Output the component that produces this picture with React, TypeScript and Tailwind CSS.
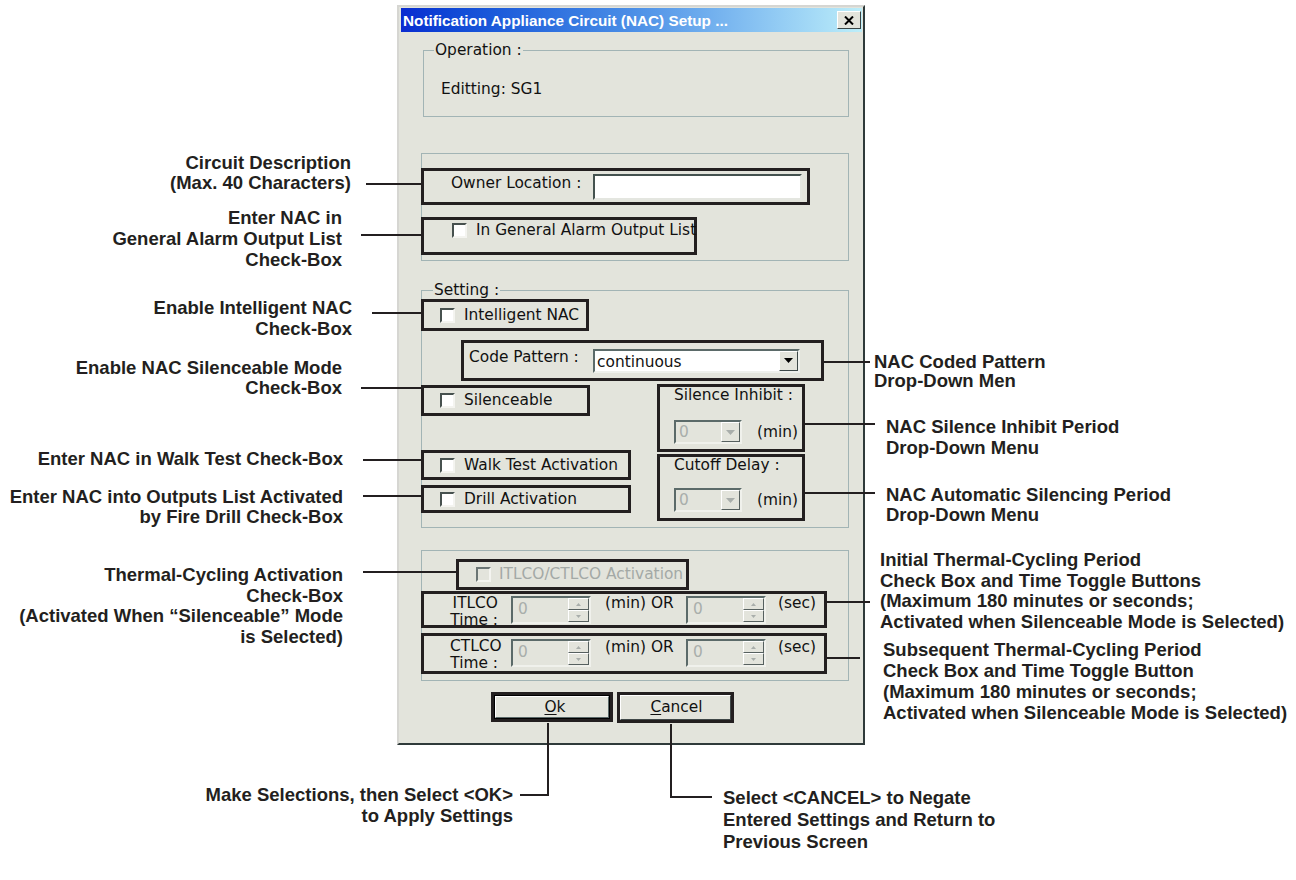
import React from 'react';

// NAC setup dialog with callout annotations

function Checkbox({ disabled }: { disabled?: boolean }) {
  return (
    <span
      className={
        disabled
          ? 'inline-block w-[15px] h-[15px] shrink-0 bg-[#e3e4dc] border-2 border-t-[#6b7574] border-l-[#6b7574] border-r-[#f4f4f0] border-b-[#f4f4f0]'
          : 'inline-block w-[15px] h-[15px] shrink-0 bg-white border-2 border-t-[#47514f] border-l-[#47514f] border-r-[#f4f4f0] border-b-[#f4f4f0]'
      }
    />
  );
}

function Tri({ color, up }: { color: string; up?: boolean }) {
  return (
    <svg width="9" height="5" viewBox="0 0 9 5">
      <path d={up ? 'M4.5 0L9 5H0z' : 'M0 0h9L4.5 5z'} fill={color} />
    </svg>
  );
}

function SmallTri({ up }: { up?: boolean }) {
  return (
    <svg width="5" height="3" viewBox="0 0 5 3">
      <path d={up ? 'M2.5 0L5 3H0z' : 'M0 0h5L2.5 3z'} fill="#a9aeab" />
    </svg>
  );
}

function SmallCombo() {
  return (
    <div className="w-[68px] h-[24px] flex bg-[#e3e4dc] border-2 border-t-[#5b6a69] border-l-[#5b6a69] border-r-[#f0f1ec] border-b-[#f0f1ec]">
      <span className="flex-1 pl-[3px] flex items-center text-[#a9aeab]">0</span>
      <span className="w-[19px] flex items-center justify-center border border-t-white border-l-white border-r-[#56605f] border-b-[#56605f]">
        <Tri color="#a9aeab" />
      </span>
    </div>
  );
}

function Spin() {
  return (
    <div className="w-[80px] h-[28px] flex bg-[#e3e4dc] border-2 border-t-[#5b6a69] border-l-[#5b6a69] border-r-[#f0f1ec] border-b-[#f0f1ec]">
      <span className="flex-1 pl-[5px] pt-[3px] text-[#a9aeab]">0</span>
      <div className="w-[21px] flex flex-col">
        <span className="flex-1 flex items-center justify-center border border-t-white border-l-white border-r-[#56605f] border-b-[#56605f]">
          <SmallTri up />
        </span>
        <span className="flex-1 flex items-center justify-center border border-t-white border-l-white border-r-[#56605f] border-b-[#56605f]">
          <SmallTri />
        </span>
      </div>
    </div>
  );
}

function Note({ className, lines }: { className: string; lines: string[] }) {
  return (
    <div className={`absolute whitespace-nowrap font-['Liberation_Sans',Arial,sans-serif] font-bold text-[18.5px] text-[#231f20] ${className}`}>
      {lines.map((l) => (
        <div key={l}>{l}</div>
      ))}
    </div>
  );
}

export default function App() {
  return (
    <div className="relative w-[1296px] h-[880px] overflow-hidden bg-white font-['DejaVu_Sans',Verdana,sans-serif] text-[15.4px] leading-[17px] text-[#111]">
      <div className="pl-[397px] pt-[5px]">
        <div className="w-[468px] h-[740px] bg-[#e3e4dc] border-2 border-t-[#d6d6d2] border-l-[#d6d6d2] border-r-[#2f3a3a] border-b-[#2f3a3a]">
          {/* title bar */}
          <div className="ml-[2px] mt-[1px] w-[461px] h-[24px] flex items-center justify-between bg-linear-to-r from-[#0b2bd0] via-[#4b8ee6] to-[#bdeef9]">
            <span className="pl-[2px] font-['Liberation_Sans',Arial,sans-serif] font-bold text-[15.3px] text-white">
              Notification Appliance Circuit (NAC) Setup ...
            </span>
            <span className="mr-[1px] w-[24px] h-[18px] flex items-center justify-center bg-[#e3e4dc] border border-t-white border-l-white border-r-[#3a4444] border-b-[#3a4444]">
              <svg width="10" height="9" viewBox="0 0 10 9">
                <path d="M1 0.5L9 8.5M9 0.5L1 8.5" stroke="#000" strokeWidth="2" />
              </svg>
            </span>
          </div>

          {/* Operation */}
          <fieldset className="mt-[10px] ml-[24px] w-[426px] border border-[#a2b4b5]">
            <legend className="ml-[10px] px-[1px] leading-[17px]">Operation :</legend>
            <div className="pl-[17px] pt-[22px] pb-[18px]">Editting: SG1</div>
          </fieldset>

          {/* Owner / general alarm */}
          <div className="mt-[36px] ml-[22px] w-[428px] border border-[#a2b4b5] pt-[14px] pb-[5px]">
            <div className="-ml-px w-[389px] h-[37px] border-[3px] border-[#231f20] flex items-center pl-[27px] pr-[5px]">
              <span className="pb-[7px]">Owner Location :</span>
              <span className="ml-auto w-[209px] h-[26px] bg-white border-2 border-t-[#44524f] border-l-[#44524f] border-r-[#e4e6e0] border-b-[#e4e6e0]" />
            </div>
            <div className="-ml-px mt-[12px] w-[276px] h-[38px] border-[3px] border-[#231f20] pt-[2px] pl-[28px]">
              <div className="flex items-center gap-[9px] whitespace-nowrap">
                <Checkbox />
                <span>In General Alarm Output List</span>
              </div>
            </div>
          </div>

          {/* Setting */}
          <fieldset className="mt-[21px] ml-[22px] w-[428px] border border-[#a2b4b5]">
            <legend className="ml-[11px] px-[1px] leading-[17px]">Setting :</legend>
            <div className="pb-[6px]">
              <div className="-ml-px w-[168px] h-[32px] border-[3px] border-[#231f20] flex items-center pl-[16px] gap-[9px]">
                <Checkbox />
                <span>Intelligent NAC</span>
              </div>
              <div className="ml-[39px] mt-[9px] w-[363px] h-[41px] border-[3px] border-[#231f20] flex items-center pl-[5px] pr-[21px]">
                <span className="pb-[7px]">Code Pattern :</span>
                <div className="ml-auto w-[207px] h-[24px] flex bg-white border-2 border-t-[#5b6a69] border-l-[#5b6a69] border-r-[#eef0ec] border-b-[#eef0ec]">
                  <span className="flex-1 pl-[2px] pt-[3px]">continuous</span>
                  <span className="w-[19px] flex items-center justify-center bg-[#e3e4dc] border border-t-white border-l-white border-r-[#3d4848] border-b-[#3d4848]">
                    <Tri color="#000" />
                  </span>
                </div>
              </div>
              <div className="mt-[3px] flex items-start">
                <div className="-ml-px mt-[1px] w-[210px]">
                  <div className="w-[169px] h-[31px] border-[3px] border-[#231f20] flex items-center pl-[16px] gap-[9px]">
                    <Checkbox />
                    <span>Silenceable</span>
                  </div>
                  <div className="mt-[34px] w-[210px] h-[30px] border-[3px] border-[#231f20] flex items-center pl-[16px] gap-[9px]">
                    <Checkbox />
                    <span>Walk Test Activation</span>
                  </div>
                  <div className="mt-[5px] w-[210px] h-[28px] border-[3px] border-[#231f20] flex items-center pl-[16px] gap-[9px]">
                    <Checkbox />
                    <span>Drill Activation</span>
                  </div>
                </div>
                <div className="ml-[26px]">
                  <div className="w-[148px] h-[68px] border-[3px] border-[#231f20] pl-[14px]">
                    <div>Silence Inhibit :</div>
                    <div className="mt-[16px] flex items-center">
                      <SmallCombo />
                      <span className="ml-[15px]">(min)</span>
                    </div>
                  </div>
                  <div className="mt-[2px] w-[148px] h-[67px] border-[3px] border-[#231f20] pl-[14px]">
                    <div>Cutoff Delay :</div>
                    <div className="mt-[14px] flex items-center">
                      <SmallCombo />
                      <span className="ml-[15px]">(min)</span>
                    </div>
                  </div>
                </div>
              </div>
            </div>
          </fieldset>

          {/* thermal cycling */}
          <div className="mt-[22px] ml-[22px] w-[428px] border border-[#a2b4b5] pt-[8px] pb-[6px]">
            <div className="ml-[34px] w-[233px] h-[31px] border-[3px] border-[#231f20] flex items-center pl-[17px] gap-[8px] whitespace-nowrap">
              <Checkbox disabled />
              <span className="text-[#a3a9a6]">ITLCO/CTLCO Activation</span>
            </div>
            <div className="-ml-px mt-[1px] w-[406px] h-[37px] border-[3px] border-[#231f20] flex items-start whitespace-nowrap">
              <div className="ml-[26px] mt-[1px] w-[48px] text-right">
                <div>ITLCO</div>
                <div>Time :</div>
              </div>
              <div className="ml-[13px] mt-[2px]">
                <Spin />
              </div>
              <span className="ml-[14px] mt-[1px] w-[68px]">(min) OR</span>
              <div className="ml-[13px] mt-[2px]">
                <Spin />
              </div>
              <span className="ml-[12px] mt-[1px]">(sec)</span>
            </div>
            <div className="-ml-px mt-[5px] w-[406px] h-[41px] border-[3px] border-[#231f20] flex items-start whitespace-nowrap">
              <div className="ml-[26px] mt-[2px] w-[48px] text-right">
                <div>CTLCO</div>
                <div>Time :</div>
              </div>
              <div className="ml-[13px] mt-[3px]">
                <Spin />
              </div>
              <span className="ml-[14px] mt-[3px] w-[68px]">(min) OR</span>
              <div className="ml-[13px] mt-[3px]">
                <Spin />
              </div>
              <span className="ml-[12px] mt-[3px]">(sec)</span>
            </div>
          </div>

          {/* buttons */}
          <div className="mt-[11px] ml-[92px] flex items-start gap-[4px]">
            <div className="w-[122px] h-[30px] border-[3px] border-[#231f20]">
              <div className="h-full border border-black">
                <div className="h-full flex items-center justify-center pl-[6px] border border-t-white border-l-white border-r-[#5a6868] border-b-[#5a6868]">
                  <span>
                    <span className="underline underline-offset-2">O</span>k
                  </span>
                </div>
              </div>
            </div>
            <div className="w-[117px] h-[31px] border-[3px] border-[#231f20]">
              <div className="h-full flex items-center justify-center pl-[2px] border border-t-white border-l-white border-r-[#404848] border-b-[#404848]">
                <span>
                  <span className="underline underline-offset-2">C</span>ancel
                </span>
              </div>
            </div>
          </div>
        </div>
      </div>

      {/* leader lines */}
      <svg className="absolute left-0 top-0 pointer-events-none" width="1296" height="880" viewBox="0 0 1296 880">
        <g stroke="#231f20" strokeWidth="2" fill="none">
          <path d="M366 184H421" />
          <path d="M361 235H421" />
          <path d="M372 313H421" />
          <path d="M361 388H421" />
          <path d="M363 460H421" />
          <path d="M363 496H421" />
          <path d="M363 572H456" />
          <path d="M824 362H870" />
          <path d="M805 424H875" />
          <path d="M805 493H875" />
          <path d="M827 602H870" />
          <path d="M827 658H860" />
          <path d="M548 723V795H520" />
          <path d="M671 724V797H712" />
        </g>
      </svg>

      {/* left notes */}
      <Note className="left-0 top-[153px] w-[351px] text-right leading-[20px]" lines={['Circuit Description', '(Max. 40 Characters)']} />
      <Note className="left-0 top-[207px] w-[342px] text-right leading-[21px]" lines={['Enter NAC in', 'General Alarm Output List', 'Check-Box']} />
      <Note className="left-0 top-[297px] w-[352px] text-right leading-[21px]" lines={['Enable Intelligent NAC', 'Check-Box']} />
      <Note className="left-0 top-[358px] w-[342px] text-right leading-[20px]" lines={['Enable NAC Silenceable Mode', 'Check-Box']} />
      <Note className="left-0 top-[448px] w-[343px] text-right leading-[21px]" lines={['Enter NAC in Walk Test Check-Box']} />
      <Note className="left-0 top-[487px] w-[343px] text-right leading-[20px]" lines={['Enter NAC into Outputs List Activated', 'by Fire Drill Check-Box']} />
      <Note
        className="left-0 top-[565px] w-[343px] text-right leading-[20.7px]"
        lines={['Thermal-Cycling Activation', 'Check-Box', '(Activated When \u201cSilenceable\u201d Mode', 'is Selected)']}
      />

      {/* right notes */}
      <Note className="left-[874px] top-[352px] leading-[19px]" lines={['NAC Coded Pattern', 'Drop-Down Men']} />
      <Note className="left-[886px] top-[416px] leading-[21px]" lines={['NAC Silence Inhibit Period', 'Drop-Down Menu']} />
      <Note className="left-[886px] top-[485px] leading-[20px]" lines={['NAC Automatic Silencing Period', 'Drop-Down Menu']} />
      <Note
        className="left-[880px] top-[550px] leading-[20.7px]"
        lines={['Initial Thermal-Cycling Period', 'Check Box and Time Toggle Buttons', '(Maximum 180 minutes or seconds;', 'Activated when Silenceable Mode is Selected)']}
      />
      <Note
        className="left-[883px] top-[639px] leading-[21px]"
        lines={['Subsequent Thermal-Cycling Period', 'Check Box and Time Toggle Button', '(Maximum 180 minutes or seconds;', 'Activated when Silenceable Mode is Selected)']}
      />

      {/* bottom notes */}
      <Note className="left-0 top-[784px] w-[513px] text-right leading-[21px]" lines={['Make Selections, then Select <OK>', 'to Apply Settings']} />
      <Note className="left-[723px] top-[787px] leading-[22px]" lines={['Select <CANCEL> to Negate', 'Entered Settings and Return to', 'Previous Screen']} />
    </div>
  );
}
